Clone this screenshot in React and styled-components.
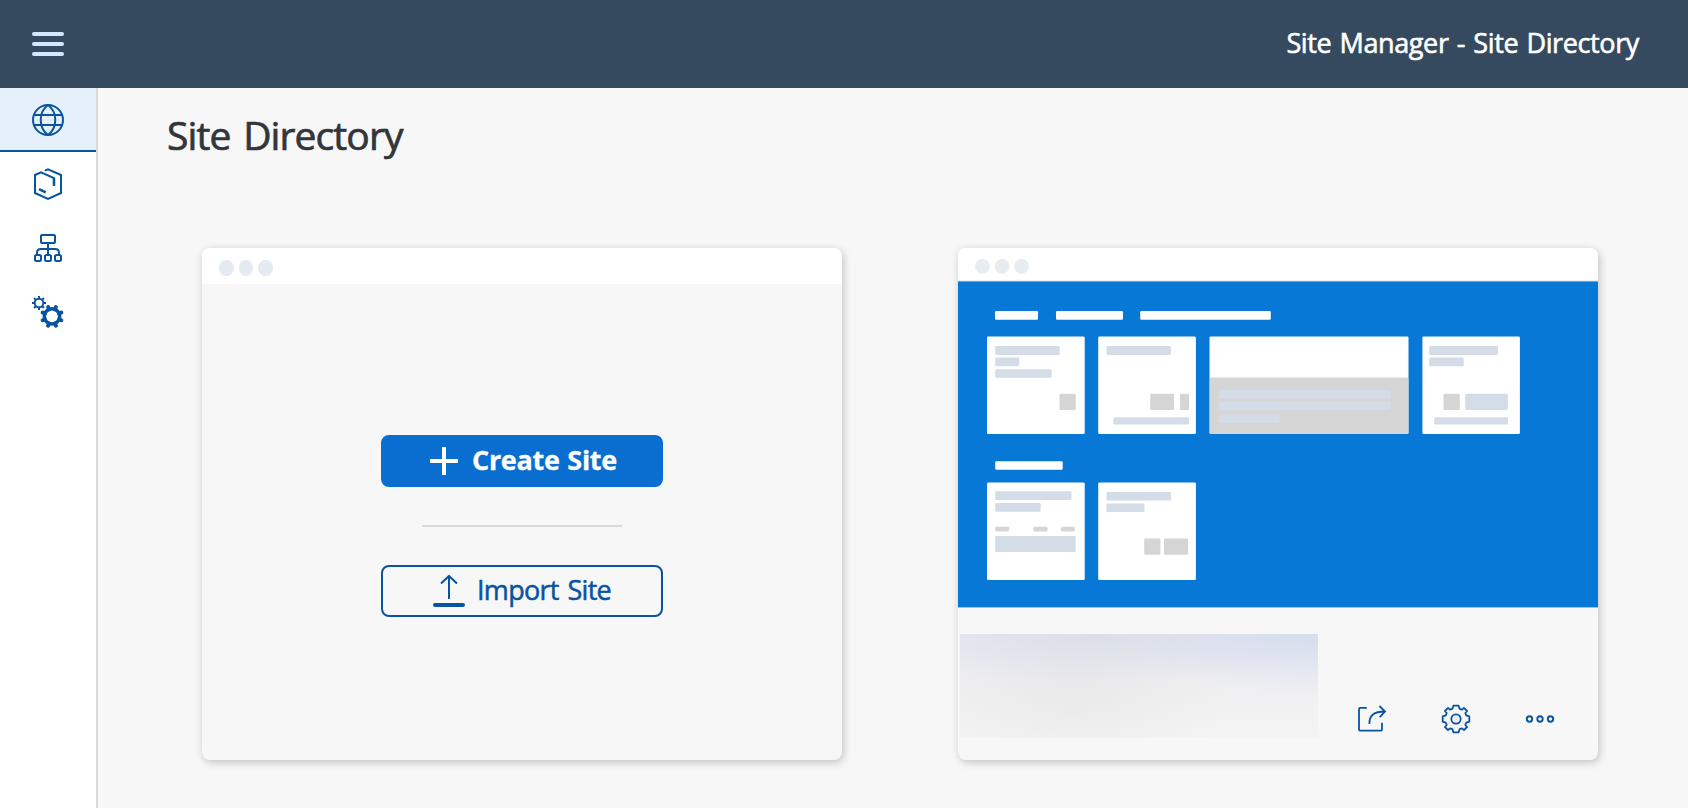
import React from "react";
import styled, { createGlobalStyle } from "styled-components";

const GlobalStyle = createGlobalStyle`
  *, *::before, *::after { box-sizing: border-box; }
  body {
    margin: 0;
    background: #f7f7f7;
    color: #32363a;
    font-family: "Open Sans", "Noto Sans", sans-serif;
  }
  button { font: inherit; padding: 0; margin: 0; border: 0; background: none; cursor: pointer; }
  svg { display: block; }
`;

const Page = styled.div`
  display: flex;
  flex-direction: column;
  height: 100vh;
  min-height: 808px;
  overflow: hidden;
`;

const ShellBar = styled.header`
  display: flex;
  align-items: center;
  justify-content: space-between;
  flex: none;
  height: 88px;
  padding: 0 49px 0 32px;
  background: #354a5f;
  color: #fff;
`;

const MenuButton = styled.button`
  display: flex;
  flex-direction: column;
  gap: 6px;
`;

const MenuLine = styled.span`
  width: 32px;
  height: 4px;
  border-radius: 2px;
  background: #d1e8ff;
`;

const ShellTitle = styled.span`
  padding-bottom: 2px;
  font-size: 27px;
  line-height: 36px;
  letter-spacing: -0.38px;
  word-spacing: 1.6px;
  -webkit-text-stroke: 0.6px currentColor;
  white-space: nowrap;
`;

const Body = styled.div`
  display: flex;
  flex: 1;
  min-height: 0;
`;

const SideNav = styled.nav`
  flex: none;
  width: 98px;
  border-right: 2px solid #d9d9d9;
  background: #fff;
`;

const NavItem = styled.button`
  display: flex;
  justify-content: center;
  width: 100%;
  height: 64px;
  padding-top: 16px;
  color: #0854a0;
  background: ${(p) => (p.$active ? "#e5f0fa" : "transparent")};
  border-bottom: 2px solid ${(p) => (p.$active ? "#0854a0" : "transparent")};
`;

const Main = styled.main`
  flex: 1;
  padding: 20px 90px 48px 69px;
`;

const Heading = styled.h1`
  margin: 0;
  height: 140px;
  font-size: 39px;
  line-height: 54px;
  font-weight: 400;
  letter-spacing: -0.9px;
  word-spacing: 3.5px;
  -webkit-text-stroke: 0.7px currentColor;
  white-space: nowrap;
`;

const Cards = styled.div`
  display: flex;
  justify-content: space-between;
  padding-left: 35px;
`;

const Card = styled.section`
  display: flex;
  flex-direction: column;
  width: 640px;
  height: 512px;
  border-radius: 8px;
  overflow: hidden;
  background: #f7f7f7;
  box-shadow: 2px 3px 8px rgba(0, 0, 0, 0.17), 0 0 8px rgba(0, 0, 0, 0.06);
`;

const WindowBar = styled.div`
  display: flex;
  align-items: center;
  gap: 5px;
  flex: none;
  height: 36px;
  padding: 4px 0 0 17px;
  background: #fff;
`;

const WindowDot = styled.span`
  width: 14.6px;
  height: 16px;
  border-radius: 50%;
  background: #e4eaf1;
`;

const Actions = styled.div`
  display: flex;
  flex-direction: column;
  align-items: center;
  padding-top: 151px;
`;

const ActionButton = styled.button`
  display: flex;
  align-items: center;
  width: 282px;
  height: 52px;
  padding-left: ${(p) => (p.$primary ? 47 : 50)}px;
  gap: ${(p) => (p.$primary ? 14 : 12)}px;
  border: 2px solid ${(p) => (p.$primary ? "#0a6ed1" : "#0854a0")};
  border-radius: 8px;
  background: ${(p) => (p.$primary ? "#0a6ed1" : "transparent")};
  color: ${(p) => (p.$primary ? "#fff" : "#0854a0")};
  font-size: 27px;
  line-height: 36px;
  font-weight: ${(p) => (p.$primary ? 700 : 400)};
  white-space: nowrap;
`;

const ActionLabel = styled.span`
  padding-bottom: 2px;
  letter-spacing: ${(p) => (p.$primary ? "-0.3px" : "-0.7px")};
  word-spacing: ${(p) => (p.$primary ? 1 : 2.4)}px;
  -webkit-text-stroke: ${(p) => (p.$primary ? 0.3 : 0.5)}px currentColor;
`;

const Divider = styled.hr`
  width: 200px;
  height: 2px;
  margin: 38px 0;
  border: 0;
  background: #d9d9d9;
`;

const CardFooter = styled.div`
  display: flex;
  align-items: flex-start;
  padding: 26px 0 0 2px;
`;

const RedactedInfo = styled.div`
  flex: none;
  width: 358px;
  height: 104px;
  background:
    radial-gradient(ellipse 150px 110px at 32% 55%, rgba(224, 224, 225, 0.4), rgba(224, 224, 225, 0)),
    radial-gradient(ellipse 190px 60px at 100% 0%, rgba(207, 216, 236, 0.75), rgba(207, 216, 236, 0)),
    radial-gradient(ellipse 230px 50px at 38% 0%, rgba(212, 219, 233, 0.8), rgba(212, 219, 233, 0)),
    linear-gradient(to bottom, #e9ecf1, #efeff1 50%, #f3f4f3);
`;

const IconBar = styled.div`
  display: flex;
  gap: 52px;
  padding: 69px 0 0 38.4px;
  color: #0854a0;
`;

const IconButton = styled.button`
  color: inherit;
`;

const stroke = { fill: "none", stroke: "currentColor", strokeWidth: 2 };

const GlobeIcon = () => (
  <svg width="32" height="32" viewBox="0 0 32 32" {...stroke}>
    <circle cx="16" cy="16" r="15" />
    <path d="M16 1C6.300 8 6.300 24 16 31C25.700 24 25.700 8 16 1ZM2 11h28M2 21h28" />
  </svg>
);

const ContentIcon = () => (
  <svg width="32" height="32" viewBox="0 0 32 32" {...stroke}>
    <path d="M12.800 2.600 16 1.300 29 7V25L16 30.800 3 25V7L9 4.400 22 10.200V17.700" />
    <path d="M22 10.200V17.700M7 21.200l6.700 3.200" strokeWidth="2.600" />
  </svg>
);

const HierarchyIcon = () => (
  <svg width="32" height="32" viewBox="0 0 32 32" {...stroke}>
    <rect x="9" y="3" width="14" height="8" rx="1" />
    <path d="M16 11v12M5 23v-2q0-4 4-4h14q4 0 4 4v2" />
    <rect x="3" y="23" width="6" height="6" rx="1.500" />
    <rect x="13" y="23" width="6" height="6" rx="1.500" />
    <rect x="23" y="23" width="6" height="6" rx="1.500" />
  </svg>
);

const teeth = [0, 45, 90, 135, 180, 225, 270, 315];

const GearsIcon = () => (
  <svg width="32" height="32" viewBox="0 0 32 32" {...stroke}>
    <circle cx="7" cy="7" r="4.300" strokeWidth="1.900" />
    {teeth.map((a) => (
      <path key={a} d="M7 0v2.600" strokeWidth="2" transform={`rotate(${a} 7 7)`} />
    ))}
    <circle cx="20" cy="20.400" r="7.700" strokeWidth="3.500" />
    {teeth.map((a) => (
      <path
        key={a}
        d="M20 10.300v2.400"
        strokeWidth="4"
        strokeLinecap="round"
        transform={`rotate(${a + 22.5} 20 20.400)`}
      />
    ))}
  </svg>
);

const PlusIcon = () => (
  <svg width="28" height="28" viewBox="0 0 28 28" {...stroke} strokeWidth="4">
    <path d="M14 0v28M0 14h28" />
  </svg>
);

const UploadIcon = () => (
  <svg width="32" height="32" viewBox="0 0 32 32" {...stroke}>
    <path d="M16 24V1M8 8.500 16 .900l8 7.600" />
    <path d="M2 30h28" strokeWidth="4" strokeLinecap="round" />
  </svg>
);

const ShareIcon = () => (
  <svg width="32" height="32" viewBox="0 0 32 32" {...stroke} strokeWidth="1.800">
    <path d="M10.800 4.900H4q-1 0-1 1V26.600q0 1 1 1H25q1 0 1-1V19.800" />
    <path d="M13.400 21C13.200 12.500 17.900 8.500 29 8.500M23.400 3 29 8.500 23.700 14.200" />
  </svg>
);

const SettingsIcon = () => (
  <svg width="32" height="32" viewBox="-16 -16 32 32" {...stroke} strokeWidth="1.800">
    <path
      strokeLinejoin="round"
      d="M-2.600-13.300H2.600L3.600-10.200 6-9.300 8-11.100 11.100-8 9.300-6 10.200-3.600 13.300-2.600V2.600L10.200 3.600 9.300 6 11.100 8 8 11.100 6 9.300 3.600 10.200 2.600 13.300H-2.600L-3.600 10.200-6 9.300-8 11.100-11.100 8-9.300 6-10.200 3.600-13.300 2.600V-2.600L-10.200-3.600-9.300-6-11.100-8-8-11.100-6-9.300-3.600-10.200Z"
    />
    <circle r="4.700" />
  </svg>
);

const MoreIcon = () => (
  <svg width="32" height="32" viewBox="0 0 32 32" {...stroke} strokeWidth="1.900">
    <circle cx="5.500" cy="16" r="2.700" />
    <circle cx="16" cy="16" r="2.700" />
    <circle cx="26.500" cy="16" r="2.700" />
  </svg>
);

const WHITE = "#ffffff";
const MIST = "#d4dce8";
const GREY = "#d5d5d5";

// Thumbnail pieces as [x, y, width, height, fill]
const thumbnail = [
  [37, 63, 43, 8.700, WHITE],
  [98, 63, 67, 8.700, WHITE],
  [182.200, 63, 130.600, 8.700, WHITE],

  [29, 88.500, 97.700, 97.500, WHITE],
  [37.200, 98, 64.500, 8.900, MIST],
  [37.200, 109.400, 24.100, 8.900, MIST],
  [37.200, 121.200, 56.500, 8.600, MIST],
  [101.500, 145.800, 16.200, 16.200, GREY],

  [140.200, 88.500, 97.700, 97.500, WHITE],
  [148.500, 98, 64.500, 8.900, MIST],
  [192.200, 145.800, 23.800, 16.200, GREY],
  [221.900, 145.800, 9.100, 16.200, GREY],
  [155.300, 169.200, 75.700, 7.300, MIST],

  [251.500, 88.500, 199, 97.500, WHITE],
  [251.900, 129.500, 198.400, 56.500, GREY],
  [261.300, 141.900, 171.700, 8.600, MIST],
  [261.300, 153.600, 171.700, 8.600, MIST],
  [261.300, 166.600, 60.400, 8.600, MIST],

  [464.400, 88.500, 97.500, 97.500, WHITE],
  [471.200, 98, 68.800, 8.900, MIST],
  [471.200, 109.400, 34.500, 8.900, MIST],
  [485.500, 145.800, 16.300, 16.200, GREY],
  [507.200, 145.800, 42.700, 16.200, MIST],
  [476.200, 169.200, 73.700, 7.300, MIST],

  [37.200, 213.200, 67.500, 8.500, WHITE],

  [29, 234.400, 97.700, 97.700, WHITE],
  [37.200, 243.200, 76.300, 8.800, MIST],
  [37.200, 255, 45.500, 8.700, MIST],
  [37.200, 278.800, 14, 4.600, GREY],
  [75.300, 278.800, 14.300, 4.600, GREY],
  [102.900, 278.800, 14, 4.600, GREY],
  [37.200, 287.900, 80.400, 16.200, MIST],

  [140.200, 234.400, 97.700, 97.700, WHITE],
  [148.500, 243.900, 64.500, 8.600, MIST],
  [148.500, 255.500, 38, 8.600, MIST],
  [186.200, 290.500, 16.200, 16.300, GREY],
  [206, 290.500, 24, 16.300, GREY],
];

const SiteThumbnail = () => (
  <svg width="640" height="360" viewBox="0 0 640 360" role="img" aria-label="Site preview">
    <rect width="640" height="360" fill="#f7f7f7" />
    <rect width="640" height="33" fill="#fff" />
    <rect y="32.300" width="640" height="1.200" fill="#e6ecf0" />
    {[24.400, 44, 63.500].map((cx) => (
      <circle key={cx} cx={cx} cy="18.300" r="7.400" fill="#e6ecf0" />
    ))}
    <rect y="33.400" width="640" height="326" fill="#0778d6" />
    {thumbnail.map(([x, y, w, h, fill], i) => (
      <rect key={i} x={x} y={y} width={w} height={h} rx="1.300" fill={fill} />
    ))}
  </svg>
);

const navItems = [
  { label: "Site Directory", Icon: GlobeIcon },
  { label: "Content Manager", Icon: ContentIcon },
  { label: "Provider Manager", Icon: HierarchyIcon },
  { label: "Settings", Icon: GearsIcon },
];

const siteActions = [
  { label: "Open site", Icon: ShareIcon },
  { label: "Site settings", Icon: SettingsIcon },
  { label: "More", Icon: MoreIcon },
];

export default function App() {
  return (
    <Page>
      <GlobalStyle />
      <ShellBar>
        <MenuButton aria-label="Menu">
          <MenuLine />
          <MenuLine />
          <MenuLine />
        </MenuButton>
        <ShellTitle>Site Manager - Site Directory</ShellTitle>
      </ShellBar>
      <Body>
        <SideNav>
          {navItems.map(({ label, Icon }, i) => (
            <NavItem key={label} aria-label={label} $active={i === 0}>
              <Icon />
            </NavItem>
          ))}
        </SideNav>
        <Main>
          <Heading>Site Directory</Heading>
          <Cards>
            <Card>
              <WindowBar>
                <WindowDot />
                <WindowDot />
                <WindowDot />
              </WindowBar>
              <Actions>
                <ActionButton $primary>
                  <PlusIcon />
                  <ActionLabel $primary>Create Site</ActionLabel>
                </ActionButton>
                <Divider />
                <ActionButton>
                  <UploadIcon />
                  <ActionLabel>Import Site</ActionLabel>
                </ActionButton>
              </Actions>
            </Card>
            <Card>
              <SiteThumbnail />
              <CardFooter>
                <RedactedInfo />
                <IconBar>
                  {siteActions.map(({ label, Icon }) => (
                    <IconButton key={label} aria-label={label}>
                      <Icon />
                    </IconButton>
                  ))}
                </IconBar>
              </CardFooter>
            </Card>
          </Cards>
        </Main>
      </Body>
    </Page>
  );
}
